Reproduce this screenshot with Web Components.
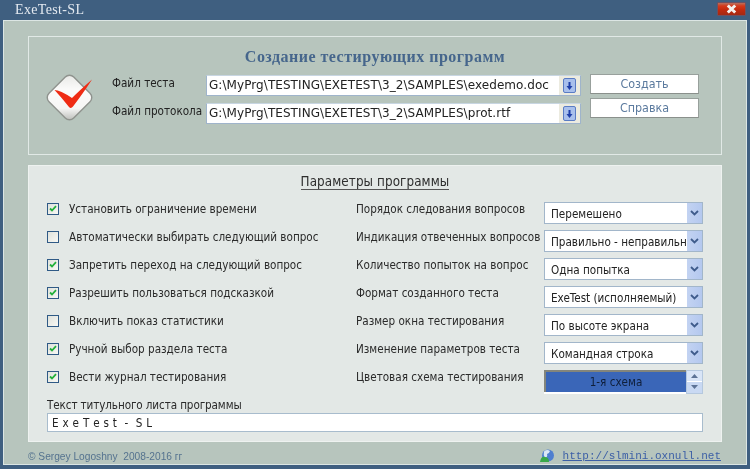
<!DOCTYPE html>
<html lang="ru">
<head>
<meta charset="utf-8">
<title>ExeTest-SL</title>
<style>
  html, body { margin: 0; padding: 0; width: 750px; height: 469px; overflow: hidden; background: #3f5f80; }
  body { font: 11.6px/14px "DejaVu Sans", sans-serif; font-stretch: condensed; color: #222; }
</style>
</head>
<body>
<et-window>
  <et-titlebar slot="title">ExeTest-SL</et-titlebar>

  <et-panel slot="top" class="top">
    <et-heading>Создание тестирующих программ</et-heading>
    <et-filerow>
      <et-logo slot="logo"></et-logo>
      <span slot="label1">Файл теста</span>
      <et-filebox slot="file1">G:\MyPrg\TESTING\EXETEST\3_2\SAMPLES\exedemo.doc</et-filebox>
      <et-button slot="btn1">Создать</et-button>
      <span slot="label2">Файл протокола</span>
      <et-filebox slot="file2">G:\MyPrg\TESTING\EXETEST\3_2\SAMPLES\prot.rtf</et-filebox>
      <et-button slot="btn2">Справка</et-button>
    </et-filerow>
  </et-panel>

  <et-params slot="params">
    <et-check checked>Установить ограничение времени</et-check>
    <et-option label="Порядок следования вопросов">Перемешено</et-option>
    <et-check>Автоматически выбирать следующий вопрос</et-check>
    <et-option label="Индикация отвеченных вопросов">Правильно - неправильно</et-option>
    <et-check checked>Запретить переход на следующий вопрос</et-check>
    <et-option label="Количество попыток на вопрос">Одна попытка</et-option>
    <et-check checked>Разрешить пользоваться подсказкой</et-check>
    <et-option label="Формат созданного теста">ExeTest (исполняемый)</et-option>
    <et-check>Включить показ статистики</et-check>
    <et-option label="Размер окна тестирования">По высоте экрана</et-option>
    <et-check checked>Ручной выбор раздела теста</et-check>
    <et-option label="Изменение параметров теста">Командная строка</et-option>
    <et-check checked>Вести журнал тестирования</et-check>
    <et-option label="Цветовая схема тестирования" spin>1-я схема</et-option>
    <et-textfield slot="caption" label="Текст титульного листа программы" value="E x e T e s t  -  S L"></et-textfield>
  </et-params>

  <et-footer slot="footer" href="http://slmini.oxnull.net">© Sergey Logoshny&nbsp; 2008-2016 гг</et-footer>
</et-window>

<script>
function define(name, css, html, init) {
  customElements.define(name, class extends HTMLElement {
    constructor() {
      super();
      this.attachShadow({ mode: "open" }).innerHTML = `<style>${css}</style>${html}`;
    }
    connectedCallback() {
      if (init) init.call(this, this.shadowRoot);
    }
  });
}

define("et-window", `
  :host { display: block; width: 750px; height: 469px; background: #3f5f80; filter: blur(.3px); }
  .client { margin: 0 3px; height: 445px; box-sizing: border-box; background: #b7c5bd;
    border: 1px solid #dce6e4; padding: 15px 24px 0; display: flex; flex-direction: column; gap: 10px; }
`, `<slot name="title"></slot>
  <div class="client">
    <slot name="top"></slot>
    <slot name="params"></slot>
    <slot name="footer"></slot>
  </div>`);

define("et-titlebar", `
  :host { display: flex; justify-content: space-between; height: 20px;
    padding: 0 4px 0 15px; font: 14px/20px "Liberation Serif", serif; letter-spacing: .35px; color: #e4eaf0; }
  .close { width: 29px; height: 14px; margin-top: 2px; display: flex; align-items: center; justify-content: center;
    background: linear-gradient(#b8705e 0, #d5381a 25%, #c42a0e 55%, #a32a14 100%);
    border: 1px solid #6f5060; box-sizing: border-box; border-radius: 1px; }
`, `<slot></slot>
  <div class="close"><svg width="11" height="10" viewBox="0 0 11 10">
    <path d="M1.8 1.5 L9.2 8.5 M9.2 1.5 L1.8 8.5" stroke="#f4f1ee" stroke-width="3" stroke-linecap="butt"/>
  </svg></div>`);

define("et-panel", `
  :host { display: block; height: 119px; box-sizing: border-box; border: 1px solid #e1e9e6; padding-top: 10px; }
`, `<slot></slot>`);

define("et-heading", `
  :host { display: block; text-align: center; font: bold 16px/20px "Liberation Serif", serif;
    color: #46668c; letter-spacing: .48px; }
`, `<slot></slot>`);

define("et-filerow", `
  :host { display: grid; margin: 8px 0 0 17px; grid-template-columns: 66px 94px 375px 118px;
    grid-template-rows: 21px 21px; row-gap: 7px; }
  .logo { grid-row: 1 / 3; }
  .lb { align-self: start; padding-top: 1px; color: #222; white-space: nowrap; }
  .btn { padding-left: 9px; margin-top: -1px; }
  .btn2 { margin-top: -5px; }
`, `<div class="logo"><slot name="logo"></slot></div>
  <div class="lb"><slot name="label1"></slot></div>
  <slot name="file1"></slot>
  <div class="btn"><slot name="btn1"></slot></div>
  <div class="lb"><slot name="label2"></slot></div>
  <slot name="file2"></slot>
  <div class="btn btn2"><slot name="btn2"></slot></div>`);

define("et-logo", `
  :host { display: block; width: 48px; height: 48px; margin-top: -2px; }
`, `<svg width="48" height="48" viewBox="0 0 48 48">
  <defs><linearGradient id="g" x1="0" y1="0" x2="1" y2="1">
    <stop offset="0" stop-color="#e6e7e4"/><stop offset=".35" stop-color="#fbfbfa"/><stop offset=".72" stop-color="#f6f6f5"/><stop offset="1" stop-color="#b2b4b0"/>
  </linearGradient></defs>
  <rect x="6" y="7" width="35" height="35" rx="6" transform="rotate(45 23.5 24.5)" fill="url(#g)" stroke="#8f938e" stroke-width="1.4"/>
  <path d="M8.5 17 Q14 17 26 25 Q34 17 46 6.5 Q38 19 27 33.5 Q25 36 23 34 Q16 25 8.5 17 Z" fill="#ef2c14"/>
</svg>`);

define("et-filebox", `
  :host { display: flex; width: 375px; height: 21px; box-sizing: border-box; background: #fff;
    border: 1px solid #9fb4cb; border-top-color: #c8d6e2; align-items: center;
    font: 12px/19px "DejaVu Sans", sans-serif; letter-spacing: .07px; color: #222; white-space: nowrap; overflow: hidden; }
  .t { flex: 1; padding-left: 2px; overflow: hidden; }
  .b { width: 21px; height: 19px; background: #ecebe0; display: flex; align-items: center; justify-content: center; }
  .i { width: 11px; height: 13px; background: #a9c0ec; border: 1px solid #5a7cc4; border-radius: 2px; display: flex; align-items: center; justify-content: center; }
`, `<div class="t"><slot></slot></div>
  <div class="b"><div class="i"><svg width="7" height="8" viewBox="0 0 7 8"><path d="M2.5 0h2v4h2L3.5 8 .5 4h2z" fill="#1f3fa8"/></svg></div></div>`);

define("et-button", `
  :host { display: block; width: 109px; height: 20px; box-sizing: border-box; background: #fff;
    border: 1px solid #98a09c; border-bottom-color: #8a908c; text-align: center;
    font: 12.4px/18px "DejaVu Sans", sans-serif; font-stretch: condensed; color: #5b7a9e; }
`, `<slot></slot>`);

define("et-params", `
  :host { display: block; height: 278px; box-sizing: border-box; background: #e3e8e6; border: 1px solid #eef2f0;
    padding: 7px 18px 0; }
  h2 { margin: 0; text-align: center; font: 13.3px/18px "DejaVu Sans", sans-serif; font-stretch: condensed; letter-spacing: .1px; color: #2e2e2e; }
  h2 span { border-bottom: 1px solid #555; }
  .grid { margin-top: 11px; display: grid; grid-template-columns: 309px 347px; grid-auto-rows: 28px; }
`, `<h2><span>Параметры программы</span></h2>
  <div class="grid"><slot></slot></div>
  <slot name="caption"></slot>`);

define("et-check", `
  :host { display: flex; align-items: flex-start; gap: 10px; white-space: nowrap; color: #2a2a2a; }
  .box { flex: none; width: 12px; height: 12px; margin-top: 1px; box-sizing: border-box; border: 1px solid #2f5a86;
    background: linear-gradient(135deg, #dfe2dc, #f8f8f4); display: flex; align-items: center; justify-content: center; }
  svg { display: none; }
  :host([checked]) svg { display: block; }
`, `<div class="box"><svg width="8" height="7" viewBox="0 0 8 7"><path d="M1 3.5 L3 5.5 L7 1.2" fill="none" stroke="#22b03a" stroke-width="1.8"/></svg></div>
  <div class="t"><slot></slot></div>`);

define("et-option", `
  :host { display: grid; grid-template-columns: 188px 159px; white-space: nowrap; color: #2a2a2a; }
  .sel { height: 22px; box-sizing: border-box; background: #fff; border: 1px solid #a2b6ca;
    display: flex; overflow: hidden; }
  .val { flex: 1; min-width: 0; overflow: hidden; padding-left: 6px; line-height: 23px; color: #222; }
  .arr { flex: none; width: 15px; background: linear-gradient(90deg, #c3d3f2, #b4c8ef); display: flex; align-items: center; justify-content: center; }
  .spin { display: none; }
  :host([spin]) .sel { border: none; margin-top: 0; height: 24px; background: transparent; }
  :host([spin]) .val { margin: 0; padding: 0; text-align: center; height: 22px; box-sizing: border-box; line-height: 20px;
    background: #3a66b8; color: #0f1f3a; border-top: 2px solid #83857c; border-left: 2px solid #83857c; border-bottom: 0;
    box-shadow: 0 2px 0 #fff; }
  :host([spin]) .arr { display: none; }
  :host([spin]) .spin { display: flex; flex-direction: column; flex: none; width: 17px; border: 1px solid #b5c8de; box-sizing: border-box; height: 24px; }
  .spin div { flex: 1; display: flex; align-items: center; justify-content: center; background: #d9e5f7; }
  .spin div + div { border-top: 1px solid #fff; background: #c9d9f3; }
`, `<div class="lb"></div>
  <div class="sel">
    <div class="val"><slot></slot></div>
    <div class="arr"><svg width="9" height="6" viewBox="0 0 9 6"><path d="M1 1 L4.5 4.5 L8 1" fill="none" stroke="#3f5c8c" stroke-width="1.8"/></svg></div>
    <div class="spin">
      <div><svg width="7" height="4" viewBox="0 0 7 4"><path d="M0 4 L3.5 0 L7 4z" fill="#5d7396"/></svg></div>
      <div><svg width="7" height="4" viewBox="0 0 7 4"><path d="M0 0 L3.5 4 L7 0z" fill="#5d7396"/></svg></div>
    </div>
  </div>`, function (root) {
    root.querySelector(".lb").textContent = this.getAttribute("label");
  });

define("et-textfield", `
  :host { display: block; color: #2a2a2a; }
  .lb { letter-spacing: -.1px; }
  .inp { margin-top: 1px; height: 19px; width: 656px; box-sizing: border-box; background: #fff; border: 1px solid #a8bccd;
    padding-left: 4px; line-height: 18px; font-size: 11.6px; letter-spacing: .3px; white-space: pre; color: #222; }
`, `<div class="lb"></div><div class="inp"></div>`, function (root) {
    root.querySelector(".lb").textContent = this.getAttribute("label");
    root.querySelector(".inp").textContent = this.getAttribute("value");
  });

define("et-footer", `
  :host { display: flex; justify-content: space-between; align-items: center; margin-top: -10px; height: 22px; padding: 2px 1px 0 0;
    box-sizing: border-box; color: #55738f; font: 10.2px/12px "Liberation Sans", sans-serif; }
  .c { padding-top: 5px; }
  .r { display: flex; align-items: center; gap: 8px; padding-top: 4px; }
  a { font: 11px/14px "Liberation Mono", monospace; color: #3c5fa6; text-decoration: underline; }
`, `<div class="c"><slot></slot></div>
  <div class="r">
    <svg width="15" height="14" viewBox="0 0 15 14">
      <circle cx="8" cy="6.5" r="6" fill="#4f7fd0"/>
      <path d="M4 2.5 Q7 0 10 2 Q9 5 7 5 Q8 8 5 9 Q3 6 4 2.5z" fill="#dbe8f6"/>
      <path d="M0 13 Q1 7 5 8 Q9 8 9 13z" fill="#39a84a"/>
    </svg>
    <a></a>
  </div>`, function (root) {
    const a = root.querySelector("a");
    a.textContent = this.getAttribute("href");
    a.href = this.getAttribute("href");
  });
</script>
</body>
</html>
